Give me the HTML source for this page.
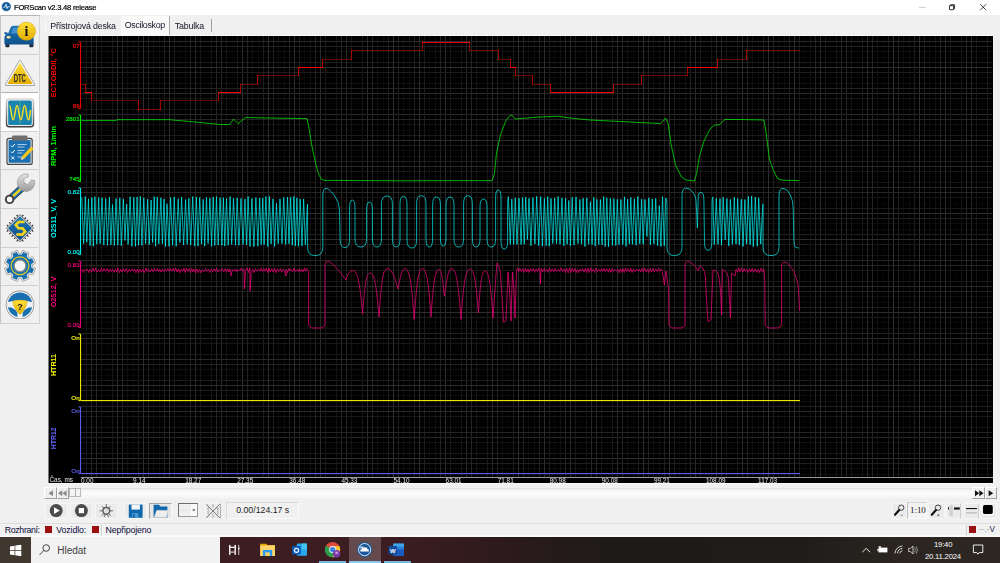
<!DOCTYPE html>
<html lang="cs"><head><meta charset="utf-8"><title>FORScan v2.3.48 release</title>
<style>
html,body{margin:0;padding:0;}
body{width:1000px;height:563px;overflow:hidden;background:#f0f0f0;position:relative;font-family:"Liberation Sans",sans-serif;color:#000;}
.a{position:absolute;}
.t{position:absolute;white-space:nowrap;line-height:1;}
#title{left:0;top:0;width:1000px;height:14.5px;background:#fff;}
#side{left:0;top:15px;width:39.5px;height:308.5px;background:#f0f0f0;border-right:1px solid #d4d4d4;border-left:1px solid #c4c4c4;border-top:1px solid #b4b4b4;box-sizing:border-box;}
.sep{position:absolute;left:1px;width:37px;height:1px;background:#d0d0d0;}
.plot{position:absolute;left:48px;top:36px;overflow:hidden;}
.btn{position:absolute;background:#ececec;border:1px solid #dcdcdc;box-sizing:border-box;}
</style></head><body>
<!-- title bar -->
<div id="title" class="a"></div>
<svg class="a" style="left:0;top:0" width="14" height="14" viewBox="0 0 14 14"><circle cx="6.3" cy="6.6" r="4.9" fill="#b8c0c8"/><circle cx="6.3" cy="6.6" r="4.4" fill="#0f5c9c"/><path d="M3.3 7.2h1.7l1.1-3 1 4.400.7-1.800h2" fill="none" stroke="#fff" stroke-width="0.8" stroke-linejoin="round"/></svg>
<div class="t" id="ttl" style="left:14px;top:3.9px;letter-spacing:-0.22px;font-size:7.6px;color:#000;-webkit-text-stroke:0.2px #000;">FORScan v2.3.48 release</div>
<svg class="a" style="left:910px;top:0" width="90" height="15" viewBox="910 0 90 15"><path d="M919 7.5h7" stroke="#c8c8c8" stroke-width="0.8"/><path d="M949.5 5.7h4v4h-4zM950.6 5.7v-1h4v4h-1" fill="none" stroke="#222" stroke-width="0.9"/><path d="M980.2 4.2l6 6M986.2 4.2l-6 6" stroke="#222" stroke-width="0.8"/></svg>

<!-- tabs -->
<div class="a" style="left:45px;top:19.5px;width:1px;height:12px;background:#fbfbfb"></div>
<div class="a" style="left:120.5px;top:16px;width:49px;height:19px;background:#fafafa;border-right:1px solid #a8a8a8;box-sizing:border-box"></div>
<div class="a" style="left:211px;top:19px;width:1px;height:13px;background:#a0a0a0"></div>
<div class="t" id="tab1" style="left:50.3px;top:21.7px;font-size:8.9px;letter-spacing:-0.18px;color:#14142a;">Přístrojová deska</div>
<div class="t" id="tab2" style="left:124.7px;top:20.7px;font-size:8.9px;letter-spacing:-0.32px;color:#14142a;">Osciloskop</div>
<div class="t" id="tab3" style="left:174.8px;top:21.7px;font-size:8.9px;letter-spacing:-0.2px;color:#14142a;">Tabulka</div>

<!-- sidebar -->
<div id="side" class="a"></div>
<div class="a" style="left:1px;top:92.6px;width:38px;height:38.2px;background:#fdfdfd"></div>
<div class="sep" style="top:53.5px"></div><div class="sep" style="top:92px;background:#b4b4b4"></div><div class="sep" style="top:130.8px"></div><div class="sep" style="top:169.3px"></div><div class="sep" style="top:208px"></div><div class="sep" style="top:246.6px"></div><div class="sep" style="top:285.2px"></div><div class="sep" style="top:323px;width:39px;left:0"></div>

<svg class="a" style="left:0;top:15px" width="40" height="310" viewBox="0 15 40 310">
<defs>
<linearGradient id="gy" x1="0" y1="0" x2="0" y2="1"><stop offset="0" stop-color="#ffe23a"/><stop offset="1" stop-color="#e2ac00"/></linearGradient>
<linearGradient id="gb" x1="0" y1="0" x2="0" y2="1"><stop offset="0" stop-color="#1d78b8"/><stop offset="1" stop-color="#0f4f8a"/></linearGradient>
<linearGradient id="gg" x1="0" y1="0" x2="0" y2="1"><stop offset="0" stop-color="#d8d8d8"/><stop offset="1" stop-color="#3c3c3c"/></linearGradient>
<linearGradient id="gs" x1="0" y1="0" x2="0" y2="1"><stop offset="0" stop-color="#e4e4e4"/><stop offset="1" stop-color="#9a9a9a"/></linearGradient>
</defs>
<!-- car + info -->
<g>
<rect x="5.4" y="43" width="4" height="4.2" rx="0.8" fill="#1c2a38"/><rect x="29.4" y="43" width="4" height="4.2" rx="0.8" fill="#1c2a38"/>
<path d="M4.3 32.2h2.6l1.2 1.2L10.6 27.6q.8-1.9 2.8-1.9h12q2 0 2.8 1.9L30.8 33.4l1.2-1.2h1.8v1.6l-1.6.8q1.4 1.4 1.4 3.6v5.2q0 1.2-1.2 1.2H5.6q-1.2 0-1.2-1.2v-5.2q0-2.2 1.4-3.6l-1.5-.8z" fill="url(#gb)"/>
<path d="M11 33.4l2-4.8q.4-.9 1.4-.9h10.4q1 0 1.400.9l2 4.800z" fill="#4d9bd4" opacity="0.8"/>
<ellipse cx="8.600" cy="37.2" rx="2.100" ry="1.300" fill="#ffe9a0"/><ellipse cx="30.4" cy="37.2" rx="2.100" ry="1.300" fill="#ffe9a0"/>
<circle cx="26.4" cy="31.2" r="9.100" fill="url(#gy)" stroke="#d89e00" stroke-width="0.5"/>
<text x="26.4" y="36.2" font-family="Liberation Serif, serif" font-weight="bold" font-size="14" text-anchor="middle" fill="#111">i</text>
</g>
<!-- DTC -->
<g>
<path d="M20 61.600L33.800 84.600H6.200z" fill="url(#gy)" stroke="#8c8c8c" stroke-width="2.600" stroke-linejoin="round"/>
<path d="M20 61.600L33.800 84.600H6.200z" fill="url(#gy)" stroke="#f4f4f4" stroke-width="1.300" stroke-linejoin="round"/>
<text x="19.800" y="82.200" font-family="Liberation Sans, sans-serif" font-size="10" font-weight="bold" text-anchor="middle" fill="#2a2a2a" textLength="12.200" lengthAdjust="spacingAndGlyphs">DTC</text>
</g>
<!-- oscilloscope -->
<g>
<rect x="5.800" y="98.200" width="28.400" height="29.200" rx="3.400" fill="url(#gg)"/>
<rect x="7.200" y="99.600" width="25.600" height="26.400" rx="2.300" fill="#f2f2f2"/>
<rect x="8.200" y="100.600" width="23.600" height="24.400" rx="1.600" fill="#1b84ae"/>
<path d="M20 101v23.600" stroke="#6fc070" stroke-width="0.600"/>
<path d="M9.400 105.500C11 105.500 11.400 119.800 13.200 119.800S15.200 105.500 17 105.500 19 119.800 20.800 119.800 22.800 105.500 24.600 105.500 26.600 119.800 28.400 119.800 29.800 112 30.600 110" fill="none" stroke="#f2dc28" stroke-width="1.500"/>
</g>
<!-- clipboard -->
<g>
<rect x="6.400" y="137.800" width="26.400" height="27.200" rx="2.600" fill="#484848"/>
<rect x="7.600" y="139" width="24" height="24.800" rx="1.600" fill="#e8e8e8"/>
<rect x="8.600" y="140" width="22" height="22.800" rx="1" fill="#1a6fb0"/>
<rect x="12" y="135.600" width="15.400" height="5.200" rx="1.200" fill="#6e6e6e"/>
<g stroke="#fff" stroke-width="1" fill="none"><path d="M11 145.600l1.400 1.400 2.400-3M11 151.600l1.400 1.400 2.400-3M11.200 156.400l3 3M14.200 156.400l-3 3"/></g>
<g stroke="#cfe2f2" stroke-width="0.800"><path d="M17.500 144.500h9M17.500 147h7M17.500 150.500h7M17.500 153h5M17.500 157h4"/></g>
<path d="M31.200 146.600l2.400 2.200-9.600 10.200-2.400-2.200z" fill="#f4c81e"/><path d="M21.600 156.800l2.400 2.200-3.600 1.400z" fill="#f0dcb4"/><path d="M20.400 160.400l1.300-.5-.8-.8z" fill="#222"/>
</g>
<!-- wrench -->
<g>
<path d="M10.600 198.400L23 187" stroke="#3a3a3a" stroke-width="7.400" stroke-linecap="round"/>
<path d="M10.600 198.400L23 187" stroke="#1a6fb0" stroke-width="5.800" stroke-linecap="round"/>
<path d="M13 196.200L21.500 188.400" stroke="#f0d024" stroke-width="2.600"/>
<circle cx="9.600" cy="199.400" r="4.700" fill="#3a3a3a"/><circle cx="9.600" cy="199.400" r="2.800" fill="#f6f6f6"/>
<path d="M27.800 174A8.800 8.800 0 1 0 34.600 180.600L31.400 179.800 28.200 184.400 24.200 183.200 23.800 178.800 28.400 176.600z" fill="url(#gs)" stroke="#8e8e8e" stroke-width="0.600" stroke-linejoin="round"/>
</g>
<!-- chip -->
<g>
<path d="M8.3 226.3l-1.5 -1.5M10.8 223.8l-1.5 -1.5M13.2 221.4l-1.5 -1.5M15.6 219.0l-1.5 -1.5M18.1 216.5l-1.5 -1.5M31.7 226.3l1.5 -1.5M29.2 223.8l1.5 -1.5M26.8 221.4l1.5 -1.5M24.4 219.0l1.5 -1.5M21.9 216.5l1.5 -1.5M8.3 230.1l-1.5 1.5M10.8 232.6l-1.5 1.5M13.2 235.0l-1.5 1.5M15.6 237.4l-1.5 1.5M18.1 239.9l-1.5 1.5M31.7 230.1l1.5 1.5M29.2 232.6l1.5 1.5M26.8 235.0l1.5 1.5M24.4 237.4l1.5 1.5M21.9 239.9l1.5 1.5" stroke="#2e2e2e" stroke-width="1.100"/>
<path d="M20 214.6L33.6 228.2 20 241.8 6.4 228.2z" fill="#dcdcdc" stroke="#6e6e6e" stroke-width="1" stroke-linejoin="round"/>
<path d="M20 217.2L31.0 228.2 20 239.2 9.0 228.2z" fill="url(#gb)" stroke="url(#gb)" stroke-width="1.500" stroke-linejoin="round"/>
<path d="M24.600 222l-5.800-.2-3 3 2.600 3.300 4.200.200 2.600 3.300-3 3-5.800-.2" fill="none" stroke="#f4d21e" stroke-width="2.700"/>
</g>
<!-- gear -->
<g transform="translate(20 265.800)">
<path d="M1.5 -11.8L3.0 -14.6L8.2 -12.4L7.3 -9.4L9.4 -7.3L12.4 -8.2L14.6 -3.0L11.8 -1.5L11.8 1.5L14.6 3.0L12.4 8.2L9.4 7.3L7.3 9.4L8.2 12.4L3.0 14.6L1.5 11.8L-1.5 11.8L-3.0 14.6L-8.2 12.4L-7.3 9.4L-9.4 7.3L-12.4 8.2L-14.6 3.0L-11.8 1.5L-11.8 -1.5L-14.6 -3.0L-12.4 -8.2L-9.4 -7.3L-7.3 -9.4L-8.2 -12.4L-3.0 -14.6L-1.5 -11.8z" fill="#1a6fb0" stroke="#8c8c8c" stroke-width="2.200" stroke-linejoin="round"/>
<path d="M1.5 -11.8L3.0 -14.6L8.2 -12.4L7.3 -9.4L9.4 -7.3L12.4 -8.2L14.6 -3.0L11.8 -1.5L11.8 1.5L14.6 3.0L12.4 8.2L9.4 7.3L7.3 9.4L8.2 12.4L3.0 14.6L1.5 11.8L-1.5 11.8L-3.0 14.6L-8.2 12.4L-7.3 9.4L-9.4 7.3L-12.4 8.2L-14.6 3.0L-11.8 1.5L-11.8 -1.5L-14.6 -3.0L-12.4 -8.2L-9.4 -7.3L-7.3 -9.4L-8.2 -12.4L-3.0 -14.6L-1.5 -11.8z" fill="#1a6fb0" stroke="#e4e4e4" stroke-width="1.100" stroke-linejoin="round"/>
<circle r="8.900" fill="none" stroke="#e8d020" stroke-width="1.100"/>
<circle r="5.900" fill="#f4f4f4" stroke="#8a8a8a" stroke-width="1.300"/>
</g>
<!-- steering wheel -->
<g transform="translate(20 304.800)">
<circle r="14.300" fill="#8a8a8a"/><circle r="13.600" fill="#f2f2f2"/>
<circle r="12.300" fill="#1a6fb0"/>
<path d="M-12.600 -2.500Q0 -6.500 12.600 -2.500L12.600 2.500Q6 2 2.600 8L2.600 13H-2.600L-2.600 8Q-6 2 -12.600 2.500z" fill="#f2f2f2"/>
<path d="M-7.300 -3.600Q0 -5.800 7.300 -3.600Q6.200 4.500 0 9.600Q-6.200 4.500 -7.300 -3.600z" fill="url(#gy)" stroke="#c89800" stroke-width="0.400"/>
<text x="0" y="5.400" font-family="Liberation Sans, sans-serif" font-weight="bold" font-size="9" text-anchor="middle" fill="#222">?</text>
</g>
</svg>

<div class="a" style="left:48px;top:35px;width:946px;height:449px;background:#f8f8f8"></div>
<svg class="plot" width="945" height="447" viewBox="48 36 945 447">
<rect x="48.5" y="36" width="944.5" height="447" fill="#000"/>
<g stroke-width="1" fill="none" shape-rendering="crispEdges"><path d="M205.5 36V477M330.5 36V477M455.5 36V477M580.5 36V477M705.5 36V477M830.5 36V477M955.5 36V477" stroke="#040404"/><path d="M107.5 36V477M232.5 36V477M357.5 36V477M482.5 36V477M607.5 36V477M732.5 36V477M857.5 36V477M982.5 36V477" stroke="#050505"/><path d="M133.5 36V477M179.5 36V477M258.5 36V477M304.5 36V477M383.5 36V477M429.5 36V477M508.5 36V477M554.5 36V477M633.5 36V477M679.5 36V477M758.5 36V477M804.5 36V477M883.5 36V477M929.5 36V477" stroke="#090909"/><path d="M153.5 36V477M159.5 36V477M278.5 36V477M284.5 36V477M403.5 36V477M409.5 36V477M528.5 36V477M534.5 36V477M653.5 36V477M659.5 36V477M778.5 36V477M784.5 36V477M903.5 36V477M909.5 36V477" stroke="#0d0d0d"/><path d="M127.5 36V477M252.5 36V477M377.5 36V477M502.5 36V477M627.5 36V477M752.5 36V477M877.5 36V477" stroke="#101010"/><path d="M185.5 36V477M310.5 36V477M435.5 36V477M560.5 36V477M685.5 36V477M810.5 36V477M935.5 36V477" stroke="#111111"/><path d="M86.5 36V477M101.5 36V477M211.5 36V477M226.5 36V477M336.5 36V477M351.5 36V477M461.5 36V477M476.5 36V477M586.5 36V477M601.5 36V477M711.5 36V477M726.5 36V477M836.5 36V477M851.5 36V477M961.5 36V477M976.5 36V477" stroke="#141414"/><path d="M112.5 36V477M200.5 36V477M237.5 36V477M325.5 36V477M362.5 36V477M450.5 36V477M487.5 36V477M575.5 36V477M612.5 36V477M700.5 36V477M737.5 36V477M825.5 36V477M862.5 36V477M950.5 36V477M987.5 36V477" stroke="#181818"/><path d="M174.5 36V477M299.5 36V477M424.5 36V477M549.5 36V477M674.5 36V477M799.5 36V477M924.5 36V477" stroke="#1b1b1b"/><path d="M138.5 36V477M263.5 36V477M388.5 36V477M513.5 36V477M638.5 36V477M763.5 36V477M888.5 36V477" stroke="#1c1c1c"/><path d="M148.5 36V477M164.5 36V477M273.5 36V477M289.5 36V477M398.5 36V477M414.5 36V477M523.5 36V477M539.5 36V477M648.5 36V477M664.5 36V477M773.5 36V477M789.5 36V477M898.5 36V477M914.5 36V477" stroke="#1f1f1f"/><path d="M122.5 36V477M190.5 36V477M247.5 36V477M315.5 36V477M372.5 36V477M440.5 36V477M497.5 36V477M565.5 36V477M622.5 36V477M690.5 36V477M747.5 36V477M815.5 36V477M872.5 36V477M940.5 36V477" stroke="#222222"/><path d="M96.5 36V477M221.5 36V477M346.5 36V477M471.5 36V477M596.5 36V477M721.5 36V477M846.5 36V477M971.5 36V477" stroke="#252525"/><path d="M91.5 36V477M216.5 36V477M341.5 36V477M466.5 36V477M591.5 36V477M716.5 36V477M841.5 36V477M966.5 36V477" stroke="#262626"/><path d="M117.5 36V477M195.5 36V477M242.5 36V477M320.5 36V477M367.5 36V477M445.5 36V477M492.5 36V477M570.5 36V477M617.5 36V477M695.5 36V477M742.5 36V477M820.5 36V477M867.5 36V477M945.5 36V477" stroke="#292929"/><path d="M169.5 36V477M294.5 36V477M419.5 36V477M544.5 36V477M669.5 36V477M794.5 36V477M919.5 36V477" stroke="#2c2c2c"/><path d="M143.5 36V477M268.5 36V477M393.5 36V477M518.5 36V477M643.5 36V477M768.5 36V477M893.5 36V477" stroke="#2d2d2d"/><g style="mix-blend-mode:lighten"><path d="M81 103.5H992M81 276.5H992" stroke="#040404"/><path d="M81 421.5H992" stroke="#050505"/><path d="M81 176.5H992M81 203.5H992" stroke="#060606"/><path d="M81 448.5H992" stroke="#070707"/><path d="M81 130.5H992M81 249.5H992" stroke="#080808"/><path d="M81 322.5H992M81 375.5H992" stroke="#090909"/><path d="M81 57.5H992M81 77.5H992" stroke="#0a0a0a"/><path d="M81 302.5H992M81 395.5H992" stroke="#0b0b0b"/><path d="M81 150.5H992M81 229.5H992" stroke="#0c0c0c"/><path d="M81 468.5H992M81 474.5H992" stroke="#0d0d0d"/><path d="M81 156.5H992M81 223.5H992" stroke="#0e0e0e"/><path d="M81 296.5H992M81 401.5H992" stroke="#0f0f0f"/><path d="M81 51.5H992M81 83.5H992" stroke="#101010"/><path d="M81 328.5H992M81 369.5H992" stroke="#111111"/><path d="M81 124.5H992M81 255.5H992" stroke="#121212"/><path d="M81 197.5H992M81 442.5H992" stroke="#131313"/><path d="M81 182.5H992" stroke="#141414"/><path d="M81 109.5H992M81 270.5H992M81 427.5H992" stroke="#151515"/><path d="M81 354.5H992" stroke="#161616"/><path d="M81 98.5H992M81 343.5H992" stroke="#171717"/><path d="M81 281.5H992M81 416.5H992" stroke="#181818"/><path d="M81 171.5H992M81 208.5H992" stroke="#191919"/><path d="M81 453.5H992" stroke="#1a1a1a"/><path d="M81 135.5H992M81 244.5H992" stroke="#1b1b1b"/><path d="M81 62.5H992M81 317.5H992M81 380.5H992" stroke="#1c1c1c"/><path d="M81 72.5H992M81 307.5H992" stroke="#1d1d1d"/><path d="M81 145.5H992M81 390.5H992" stroke="#1e1e1e"/><path d="M81 234.5H992M81 463.5H992" stroke="#1f1f1f"/><path d="M81 161.5H992M81 218.5H992" stroke="#202020"/><path d="M81 291.5H992M81 406.5H992" stroke="#212121"/><path d="M81 46.5H992M81 88.5H992" stroke="#222222"/><path d="M81 333.5H992M81 364.5H992" stroke="#232323"/><path d="M81 119.5H992M81 260.5H992" stroke="#242424"/><path d="M81 192.5H992M81 437.5H992" stroke="#252525"/><path d="M81 187.5H992M81 432.5H992" stroke="#262626"/><path d="M81 114.5H992M81 265.5H992" stroke="#272727"/><path d="M81 338.5H992M81 359.5H992" stroke="#282828"/><path d="M81 41.5H992M81 93.5H992M81 286.5H992" stroke="#292929"/><path d="M81 166.5H992M81 411.5H992" stroke="#2a2a2a"/><path d="M81 213.5H992" stroke="#2b2b2b"/><path d="M81 140.5H992M81 239.5H992M81 458.5H992" stroke="#2c2c2c"/><path d="M81 312.5H992M81 385.5H992" stroke="#2d2d2d"/><path d="M81 67.5H992" stroke="#2e2e2e"/></g></g>
<path d="M81 477.5H993" stroke="#9a9a9a" stroke-width="1" shape-rendering="crispEdges"/>
<g fill="#ff0000" font-family="Liberation Sans, sans-serif">
<path d="M78.4 42H80.6V108.6H78.4" stroke="#ff0000" stroke-width="1" fill="none"/>
<text x="79.6" y="48.4" font-size="6.2" text-anchor="end" stroke="#ff0000" stroke-width="0.15">97</text>
<text x="79.6" y="108" font-size="6.2" text-anchor="end" stroke="#ff0000" stroke-width="0.15">89</text>
<text transform="translate(55.9 72.7) rotate(-90)" font-size="7.2" font-weight="bold" text-anchor="middle" textLength="49.3" lengthAdjust="spacingAndGlyphs">ECT.OBDII, °C</text>
</g>
<g fill="#00ff00" font-family="Liberation Sans, sans-serif">
<path d="M78.4 115H80.6V181.6H78.4" stroke="#00ff00" stroke-width="1" fill="none"/>
<text x="79.6" y="121.4" font-size="6.2" text-anchor="end" stroke="#00ff00" stroke-width="0.15">2801</text>
<text x="79.6" y="181" font-size="6.2" text-anchor="end" stroke="#00ff00" stroke-width="0.15">745</text>
<text transform="translate(55.9 146) rotate(-90)" font-size="7.2" font-weight="bold" text-anchor="middle" textLength="40" lengthAdjust="spacingAndGlyphs">RPM, 1/min</text>
</g>
<g fill="#00ffff" font-family="Liberation Sans, sans-serif">
<path d="M78.4 188H80.6V254.6H78.4" stroke="#00ffff" stroke-width="1" fill="none"/>
<text x="79.6" y="194.4" font-size="6.2" text-anchor="end" stroke="#00ffff" stroke-width="0.15">0.82</text>
<text x="79.6" y="254" font-size="6.2" text-anchor="end" stroke="#00ffff" stroke-width="0.15">0.00</text>
<text transform="translate(55.9 218.4) rotate(-90)" font-size="7.2" font-weight="bold" text-anchor="middle" textLength="39.2" lengthAdjust="spacingAndGlyphs">O2S11_V, V</text>
</g>
<g fill="#ff0080" font-family="Liberation Sans, sans-serif">
<path d="M78.4 261H80.6V327.6H78.4" stroke="#ff0080" stroke-width="1" fill="none"/>
<text x="79.6" y="267.4" font-size="6.2" text-anchor="end" stroke="#ff0080" stroke-width="0.15">0.83</text>
<text x="79.6" y="327" font-size="6.2" text-anchor="end" stroke="#ff0080" stroke-width="0.15">0.00</text>
<text transform="translate(55.9 292) rotate(-90)" font-size="7.2" font-weight="bold" text-anchor="middle" textLength="30.7" lengthAdjust="spacingAndGlyphs">O2S12, V</text>
</g>
<g fill="#ffff00" font-family="Liberation Sans, sans-serif">
<path d="M78.4 334H80.6V400.6H78.4" stroke="#ffff00" stroke-width="1" fill="none"/>
<text x="79.6" y="340.4" font-size="6.2" text-anchor="end" stroke="#ffff00" stroke-width="0.15">On</text>
<text x="79.6" y="400" font-size="6.2" text-anchor="end" stroke="#ffff00" stroke-width="0.15">On</text>
<text transform="translate(55.9 365) rotate(-90)" font-size="7.2" font-weight="bold" text-anchor="middle" textLength="22" lengthAdjust="spacingAndGlyphs">HTR11</text>
</g>
<g fill="#6464ff" font-family="Liberation Sans, sans-serif">
<path d="M78.4 407H80.6V473.6H78.4" stroke="#6464ff" stroke-width="1" fill="none"/>
<text x="79.6" y="413.4" font-size="6.2" text-anchor="end" stroke="#6464ff" stroke-width="0.15">On</text>
<text x="79.6" y="473" font-size="6.2" text-anchor="end" stroke="#6464ff" stroke-width="0.15">On</text>
<text transform="translate(55.9 438.3) rotate(-90)" font-size="7.2" font-weight="bold" text-anchor="middle" textLength="22" lengthAdjust="spacingAndGlyphs">HTR12</text>
</g>
<g fill="#ff0000" shape-rendering="crispEdges"><rect x="80" y="84" width="6" height="1" opacity="0.43"/><rect x="85" y="84" width="1" height="9" opacity="0.62"/><rect x="85" y="92" width="7" height="1" opacity="0.98"/><rect x="91" y="92" width="1" height="9" opacity="0.62"/><rect x="91" y="100" width="48" height="1" opacity="0.38"/><rect x="138" y="100" width="1" height="10" opacity="0.62"/><rect x="138" y="109" width="23" height="1" opacity="0.47"/><rect x="160" y="100" width="1" height="10" opacity="0.62"/><rect x="160" y="100" width="59" height="1" opacity="0.38"/><rect x="218" y="92" width="1" height="9" opacity="0.62"/><rect x="218" y="92" width="23" height="1" opacity="0.98"/><rect x="240" y="84" width="1" height="9" opacity="0.62"/><rect x="240" y="84" width="18" height="1" opacity="0.43"/><rect x="257" y="75" width="1" height="10" opacity="0.62"/><rect x="257" y="75" width="42" height="1" opacity="0.42"/><rect x="298" y="67" width="1" height="9" opacity="0.62"/><rect x="298" y="67" width="25" height="1" opacity="0.99"/><rect x="322" y="59" width="1" height="9" opacity="0.62"/><rect x="322" y="59" width="30" height="1" opacity="0.39"/><rect x="351" y="50" width="1" height="10" opacity="0.62"/><rect x="351" y="50" width="72" height="1" opacity="0.46"/><rect x="422" y="42" width="1" height="9" opacity="0.62"/><rect x="422" y="42" width="48" height="1" opacity="0.95"/><rect x="469" y="42" width="1" height="9" opacity="0.62"/><rect x="469" y="50" width="30" height="1" opacity="0.46"/><rect x="498" y="50" width="1" height="10" opacity="0.62"/><rect x="498" y="59" width="13" height="1" opacity="0.39"/><rect x="510" y="59" width="1" height="9" opacity="0.62"/><rect x="510" y="67" width="6" height="1" opacity="0.99"/><rect x="515" y="67" width="1" height="9" opacity="0.62"/><rect x="515" y="75" width="18" height="1" opacity="0.42"/><rect x="532" y="75" width="1" height="10" opacity="0.62"/><rect x="532" y="84" width="19" height="1" opacity="0.43"/><rect x="550" y="84" width="1" height="9" opacity="0.62"/><rect x="550" y="92" width="64" height="1" opacity="0.98"/><rect x="613" y="84" width="1" height="9" opacity="0.62"/><rect x="613" y="84" width="29" height="1" opacity="0.43"/><rect x="641" y="75" width="1" height="10" opacity="0.62"/><rect x="641" y="75" width="47" height="1" opacity="0.42"/><rect x="687" y="67" width="1" height="9" opacity="0.62"/><rect x="687" y="67" width="31" height="1" opacity="0.99"/><rect x="717" y="59" width="1" height="9" opacity="0.62"/><rect x="717" y="59" width="30" height="1" opacity="0.39"/><rect x="746" y="50" width="1" height="10" opacity="0.62"/><rect x="746" y="50" width="54" height="1" opacity="0.46"/></g>
<path d="M81.5 120.6L115 120.6L118 119.7L169 119.7L190 121.5L220 124.5L229.6 124.5L233.5 119.1L238 123.6L245.5 117.6L270 118L307 118.6L309 128L311.5 144L316 165L319 175L321.5 179.3L324.5 180.4L400 180.8L492 180.6L494.4 174L496.5 153L500.4 135L505.5 121.5L508.5 117L511 115L513 116.5L515.4 119L537 117.2L558 116.2L570 118L590 120L650 123L660.5 123.6L663 121L665.6 118L668 123L671 144L675.5 165L681.5 177L686 180L694.4 181L696.5 174L699.5 156L704 141L710 129L714.5 125L719 125L725 119.4L745 119.6L764 120L766.4 135L769.4 159L773 169.5L777.5 178.5L782 180.2L799.4 180.6" stroke="#00ff00" stroke-width="0.7" fill="none" stroke-linejoin="round" opacity="1"/>
<path d="M81.8 197.3L83.6 243.7L85.3 196.5L86.8 242.3L88.5 198.9L90.1 245.6L91.9 197.6L93.3 246.3L94.9 196.7L96.8 244.1L98.7 197.5L100.1 243.7L102 197.7L103.8 245L105.7 198.5L107.5 245.2L109.4 197.2L110.9 244.9L112.5 204.5L114.4 245.4L116 198.5L117.8 245L119.8 197.8L121.3 245.8L123.4 198.9L125 240.5L126.6 204.1L128.1 244.3L130.1 196.6L131.9 246.4L133.8 197.2L135.5 246.4L137.1 196.9L138.6 245.1L140.3 196.3L141.9 245.4L143.8 197.9L145.6 243.7L147.6 199.1L149.2 244.8L151.1 200L152.6 242.6L154.2 196.6L155.6 246.4L157.2 197.1L158.8 243.9L160.9 197.8L162.4 243.8L164 199L165.5 246.6L167 203.7L169 246.3L170.6 197.5L172.6 245.3L174.2 197L176.2 246.3L178.2 198.7L179.9 242.5L181.6 197.1L183.6 245L185.6 199.4L187.2 244.2L188.8 198.3L190.7 245.1L192.7 196.6L194.7 246.1L196.4 196.9L198 246.1L199.7 197.6L201.6 244.1L203.2 199.2L204.7 246.2L206.5 197.4L208.1 243.5L209.9 198L211.6 246.4L213.2 197.1L214.8 245.4L216.5 196.7L218.2 245L220.1 197.6L221.9 245.3L223.4 197.7L224.8 246.1L226.5 198.6L228.2 245.2L230.1 196.6L231.7 244.4L233.5 198.1L235.5 245L237.2 197.9L238.9 245.3L241 198.5L243 244.4L245 199L246.5 245L248.1 196.5L250 246.5L251.9 198.4L253.9 246.7L255.9 197.6L257.9 246.2L259.7 197.9L261.2 244.6L262.7 198.1L264.1 244.6L265.9 196.5L267.8 246.7L269.4 196.4L271.1 243.9L273 198.9L274.6 246.5L276.5 203.4L278.2 243.7L280 198.9L282 243.7L283.7 197.4L285.7 244.4L287.5 197.1L289 243.7L290.6 197.3L292.3 245.2L293.9 196.4L295.4 245.9L296.9 197.8L298.5 246.2L300.2 199L302 245.8L303.6 199L305.4 244.8" stroke="#00ffff" stroke-width="0.68" fill="none" stroke-linejoin="round" opacity="1"/>
<path d="M508.4 196.7L510.3 244.3L511.8 199L513.6 244.4L515.3 197.8L517 244.4L519 198.1L521.1 244.5L522.5 197.5L524.3 244.2L525.7 197.1L527.4 239.5L529 198.2L530.9 245.7L532.9 197.5L534.9 244L536.7 196.4L538.7 245.6L540.7 196.7L542.4 246.3L544.4 198.2L546.2 245.8L547.7 196.7L549.2 246.3L551 198.3L552.8 243.5L554.7 197.9L556.5 243.7L558.1 196.5L560 244.2L562 197.9L563.8 245.8L565.6 198.4L567.1 244.3L568.8 200.5L570.4 245.7L572.2 197.2L574 245L576 196.9L578 243.6L579.9 199.4L581.5 244.2L583.1 198.2L584.9 246.6L586.8 197.9L588.7 244.3L590.4 201.8L592.1 244.5L593.8 197.3L595.2 246L596.8 199.3L598.8 244.5L600.4 199.5L602.1 244.9L603.6 196.6L605.2 246.6L606.8 197.9L608.5 246.7L610.4 198.3L612.4 245.3L613.9 198.6L615.8 245.6L617.3 199.3L619 244.6L620.9 199.4L622.8 244.5L624.5 196.8L626 246.5L627.6 199.2L629.3 244L630.8 197.4L632.4 244.4L634.4 198.7L636.1 245.2L637.8 196.5L639.8 243.9L641.6 199.1L643.2 244.3L645 199.4L646.9 236.6L648.9 197.8L650.4 244.8L652.3 199L653.9 243.9L655.7 198.5L657.6 245.6L659.3 205.5L660.9 246.5L662.5 196.7L664.3 245.8L665.8 198" stroke="#00ffff" stroke-width="0.68" fill="none" stroke-linejoin="round" opacity="1"/>
<path d="M712.8 197L714.3 244.5L716.3 198.4L718 244.3L720 198.6L721.5 245.1L723.2 197.1L725.2 239.9L726.9 198.5L728.8 245.9L730.4 199.4L732.4 244.3L734.3 197.2L736 244.1L737.7 198.4L739.3 244.8L741.3 199.2L743 246.5L744.9 199.5L746.5 244.1L748.4 196.4L750.1 244.7L751.6 196.3L753.3 246.7L755.3 197L757.3 246.2L758.7 197.8L760.7 244.1" stroke="#00ffff" stroke-width="0.68" fill="none" stroke-linejoin="round" opacity="1"/>
<path d="M305.4 244.8L307.2 208Q307.6 200 307.6 208L307.6 247.6Q307.6 255.6 315.2 255.6L315.2 255.6Q322.8 255.6 322.8 247.6L322.8 196.4Q322.8 188.4 325.9 188.4L325.9 188.4Q329 188.4 333.9 194.8L334.5 195.6Q339.4 202 339.5 210L340.1 239.6Q340.2 247.6 344.9 247.6L344.9 247.6Q349.6 247.6 349.6 239.6L349.6 208Q349.6 200 352.3 200L352.3 200Q355 200 355 208L355 239Q355 247 360.8 247L360.8 247Q366.6 247 366.6 239L366.6 210Q366.6 202 369.5 202L369.5 202Q372.4 202 372.4 210L372.4 239Q372.4 247 376.9 247L376.9 247Q381.4 247 381.4 239L381.4 204Q381.4 196 386.9 196L386.9 196Q392.4 196 392.4 204L392.4 239Q392.4 247 396.2 247L396.2 247Q400 247 400 239L400 204.4Q400 196.4 403.5 196.4L403.5 196.4Q407 196.4 407 204.4L407 240Q407 248 411.8 248L411.8 248Q416.6 248 416.6 240L416.6 203.6Q416.6 195.6 421.3 195.6L421.3 195.6Q426 195.6 426 203.6L426 239Q426 247 429.3 247L429.3 247Q432.6 247 432.6 239L432.6 205Q432.6 197 436.5 197L436.5 197Q440.4 197 440.4 205L440.4 238Q440.4 246 443.2 246L443.2 246Q446 246 446 238L446 205Q446 197 450 197L450 197Q454 197 454 205L454 239Q454 247 458.8 247L458.8 247Q463.6 247 463.6 239L463.6 203.6Q463.6 195.6 468 195.6L468 195.6Q472.4 195.6 472.4 203.6L472.4 239Q472.4 247 476.2 247L476.2 247Q480 247 480 239L480 207Q480 199 483.5 199L483.5 199Q487 199 487 207L487 239Q487 247 491.3 247L491.3 247Q495.6 247 495.6 239L495.6 198Q495.6 190 498.3 190L498.3 190Q501 190 501 198L501 241Q501 249 504.3 249L504.3 249Q507.6 249 507.6 241L507.6 208Q507.6 200 508 198.4L508.4 196.7" stroke="#00ffff" stroke-width="0.7" fill="none" stroke-linejoin="round" opacity="0.95"/>
<path d="M665.8 198L666.4 199Q667 200 667 208L667 247.6Q667 255.6 674.5 255.6L674.5 255.6Q682 255.6 682 247.6L682 196Q682 188 686 188L686 188Q690 188 692.9 192.5L694.2 194.5Q695.8 197 696 200L697.4 228L698.3 195.4Q698.4 192.4 701.1 192.4L701.1 192.4Q703.8 192.4 703.9 200.4L704.5 242.4Q704.6 250.4 708.2 250.4L708.2 250.4Q711.8 250.4 711.8 242.4L712 208Q712 200 712.4 198.5L712.8 197" stroke="#00ffff" stroke-width="0.7" fill="none" stroke-linejoin="round" opacity="0.95"/>
<path d="M760.7 244.1L762.6 208Q763 200 763 208L763 247.6Q763 255.6 771 255.6L771 255.6Q779 255.6 779 247.6L779 196.4Q779 188.4 783 188.4L783 188.4Q787 188.4 790 194.2L790 194.2Q793 200 793.2 208L793.8 238Q794 246 795 246.8L795 246.8Q796 247.5 797.5 247.8L799 248" stroke="#00ffff" stroke-width="0.7" fill="none" stroke-linejoin="round" opacity="0.95"/>
<path d="M81.8 269.5L83.1 272.5L84.6 269.5L85.8 271.1L87.4 269.1L88.8 272.6L90.1 269.1L91.7 272.1L93 268.3L94.3 271.5L95.4 268.2L97 272.1L98.6 269.6L99.8 271.9L101.4 267.9L102.7 271.5L104.1 268.7L105.6 271.3L107.2 268.3L108.7 272.4L110.1 269L111.4 271.7L112.9 269.5L114.1 272.4L115.4 269.5L116.6 272L117.9 267.8L119.4 272.8L120.7 269.4L121.9 271.9L123.3 268.8L124.6 271.8L126 268.4L127.5 272.5L129 269.4L130.5 271.5L131.9 268.9L133.4 271.4L134.6 269.2L135.9 272.6L137.3 269L138.6 272.8L140 269.2L141.5 272.2L143.1 269.4L144.4 272.5L146 268L147.1 271.5L148.3 269.3L149.9 272L151.5 268.9L153 271.8L154.3 268.2L155.9 271.2L157.3 268.5L158.6 271.7L159.8 269.2L161 272.1L162.5 269.2L163.6 271.6L165.1 269.3L166.4 271.4L167.9 268.6L169.1 271.2L170.4 268.6L171.8 271.2L173.1 268.3L174.4 271.5L175.7 267.9L177 272L178.3 268.9L179.8 272.8L181.1 269.2L182.6 271.4L183.8 268L185.1 272.5L186.4 268L187.8 271.3L188.9 268.6L190.4 272.6L191.6 268.5L192.9 271.9L194.1 269.1L195.5 272.7L196.7 268.7L198.2 272.7L199.4 269.4L201 272.8L202.4 269.5L203.9 271.7L205.5 268.5L207 271.3L208.5 269.2L209.9 272.5L211.4 269.3L212.6 271.7L214 268.9L215.2 271.4L216.7 268L217.9 272L219.4 269.5L220.9 271.2L222.3 268.6L223.7 271.6L225.1 268.6L226.4 272.2L227.8 268.8L228.9 272.1L230.3 269.2L231 276L231.8 272.4L233.1 269.3L234.5 271.2L235.7 268.8L236.9 271.8L238.3 269.5L239.7 271.1L241.2 268.2L242.6 271.1L244 268.9L244.4 289L245.5 271.2L247.1 267.8L248.6 272.5L249.8 267.8L250 291L251.2 272.7L252.7 269.3L254.2 272.7L255.4 269L256.9 271.3L258.5 269.1L260 271.3L261.3 267.9L262.6 271.5L264 269L265.1 271.3L266.4 267.9L267.8 272.6L269 268.2L270.2 272L271.7 269L273.2 272L274.6 268L275.8 272.8L277.3 268.9L278.8 271.5L280.4 268.6L281.7 272.4L283 269.3L284.5 271.1L286 276L286 269.1L287.5 272.8L288.9 268.4L290.2 271L291.3 269.3L292.8 271.8L294.1 268L295.4 271.4L296.8 269.6L298 271.6L299.2 269L300.4 272.1L301.8 269.2L303.2 271.9L304.5 267.9L305.7 271.3L306.9 268.5" stroke="#ff0080" stroke-width="0.7" fill="none" stroke-linejoin="round" opacity="1"/>
<path d="M306.9 268.5L307.8 269.5Q308.6 270.6 308.6 275.6L308.6 323Q308.6 328 313.6 328L320 328Q325 328 325 323L325 266Q325 263 326.3 261.9L326.3 261.9Q327.6 260.8 329.8 261.9L329.8 261.9Q332 263 334.6 266L336.4 268Q339 271 341.5 274.2L346 280" stroke="#ff0080" stroke-width="0.7" fill="none" stroke-linejoin="round" opacity="1"/>
<path d="M346 280C348 273.4 349.5 270.6 353 270.6C357.8 270.6 359.9 283.6 362.6 314C364.7 285.3 366.3 273 370 273C374.5 273 376.5 286.2 379 317C381.2 283.1 383 268.6 387 268.6C392.5 268.6 394.9 278.8 398 289C400 278.8 401.5 268.6 405 268.6C409.6 268.6 411.6 283.8 414.2 319.4C416.5 283.8 418.3 268.6 422.4 268.6C426.7 268.6 428.6 283.1 431 317C433.2 283.7 435 269.4 439 269.4C441.7 269.4 442.9 282.7 444.4 296C446.4 282.3 448 268.6 451.6 268.6C456.3 268.6 458.4 283.8 461 319.4C463.5 284.1 465.5 269 470 269C474.2 269 476 282.2 478.4 313C480.2 283.6 481.7 271 485 271C489 271 490.8 285.1 493 318" stroke="#ff0080" stroke-width="0.7" fill="none" stroke-linejoin="round" opacity="1"/>
<path d="M493 318L495.3 285Q495.6 280 496 275L497 263L498.5 266Q500 269 500.4 274L501.2 285Q501.6 290 501.9 295L503.5 321.6Q503.6 322.6 504.4 322L505.2 321.6Q506 321 506 320L508 272L509.2 285Q509.6 290 509.8 295L511 321L512.4 272L513.6 285Q514 290 514.2 295L515 318L516.6 270L517.4 268.2" stroke="#ff0080" stroke-width="0.7" fill="none" stroke-linejoin="round" opacity="1"/>
<path d="M517.4 268.2L518.7 271.5L519.9 268.4L521.3 271.6L522.7 268.8L524.3 272.3L525.6 268L526.7 272L528.1 269.2L529.2 272.4L530.4 268.6L532 271.3L533.2 268.5L534.6 272.2L536.1 269.3L537.4 271.5L538.6 268L540.1 272.3L540.4 284L541.2 268.1L542.7 271.8L544.2 268.8L545.4 271.2L546.7 269.5L548 272.3L549.5 268.1L550.9 271.5L552.3 268.8L553.8 271.9L555.1 268.4L556.7 271.4L558.2 269.6L559.5 271.4L561 267.9L562.5 271.6L564 269L565.3 272.6L566.7 268.4L568.2 272.8L569.5 268.1L571 272.5L572.3 268.3L573.7 271.6L575 268.5L576.2 272.6L577.4 269.6L578.6 272.7L579.9 269.3L581 271.1L582.5 268.5L584 272.3L585.2 268.5L586.5 272.5L588 268L589.2 272.6L590.7 267.9L591.9 271.4L593.1 269.5L594.7 272.5L596.1 268.1L597.5 271.5L598.7 269.4L600.2 271.4L601.5 268.8L602.7 271.5L603.9 268.3L605.3 271.6L606.8 268.7L608.4 272.1L609.5 268.9L610.9 272.4L612.2 268.3L613.6 271.4L615.1 269.4L616.6 271.3L617.8 269.2L619.3 272.8L620.4 268.7L621.8 272.4L623 268.7L624.3 272.5L625.6 267.9L626.9 271.4L628.4 268.7L629.6 272.1L630.7 268.2L632.2 272.4L633.6 269L635 271.7L636.5 269.4L638.1 271L639.3 269.1L640.9 271.9L642.2 268L643.4 271.8L644.8 268.2L646.3 272.2L647.6 269L648.8 272.5L650.3 268.3L651.5 271.8L653 268.6L654.2 271.8L655.8 269.2L657 271.5L658.5 268.1L659.7 271.3L661 269L662.3 271.3" stroke="#ff0080" stroke-width="0.7" fill="none" stroke-linejoin="round" opacity="1"/>
<path d="M662.3 271.3L664.4 285L666 271L667.9 285Q668.6 290 668.7 295L668.9 323Q669 328 674 328L680 328Q685 328 685 323L685 266.4Q685 261.4 687.5 261.4L687.5 261.4Q690 261.4 693 264.2L693 264.2Q696 267 697 269L698 271L699 267.8Q700 264.6 702.5 267.8L702.5 267.8Q705 271 705.3 276L706.3 295Q706.6 300 706.9 305L707.9 321Q708 322 708.8 321.4L710.2 320.6Q711 320 711 319L713 270L715.5 270.5Q718 271 718.7 276L719.9 285Q720.6 290 720.8 295L721.6 315L722.4 269.4L725.2 271.2Q728 273 728.3 278L728.9 290Q729.2 295 729.5 300L730.4 318L731.6 273L735 276L736 269.3" stroke="#ff0080" stroke-width="0.7" fill="none" stroke-linejoin="round" opacity="1"/>
<path d="M736 269.3L737.6 272.3L738.8 267.9L740 271.7L741.6 268.2L743.1 271.8L744.3 268.5L745.5 271.4L746.8 269.5L748.1 272.4L749.6 268.7L751 271.8L752.3 268.5L753.6 272.3L755.1 268.8L756.6 272.3L757.9 269.2L759.4 272.6L760.9 268.3L762.4 272.2L763.8 268.8" stroke="#ff0080" stroke-width="0.7" fill="none" stroke-linejoin="round" opacity="1"/>
<path d="M763.8 268.8L764.4 275Q764.8 280 764.8 285L765.2 323Q765.2 328 770.2 328L776.6 328Q781.6 328 781.6 323L781.6 267Q781.6 262 784.3 262L784.3 262Q787 262 790.1 265.9L790.9 267.1Q794 271 795.6 275.7L796.4 278.3Q798 283 798.3 288L799.6 311" stroke="#ff0080" stroke-width="0.7" fill="none" stroke-linejoin="round" opacity="1"/>
<path d="M81 400.6H800" stroke="#ffff00" stroke-width="1"/>
<path d="M81 473.6H800" stroke="#6464ff" stroke-width="1"/>
<g fill="#e8e8e8" font-family="Liberation Sans, sans-serif" font-size="6.4">
<text x="49.5" y="482.3">Čas, ms</text>
<text x="81" y="483.2">0.00</text>
<text x="133.1" y="483.2">9.14</text>
<text x="185.2" y="483.2">18.27</text>
<text x="237.2" y="483.2">27.35</text>
<text x="289.3" y="483.2">36.48</text>
<text x="341.4" y="483.2">45.33</text>
<text x="393.5" y="483.2">54.10</text>
<text x="445.6" y="483.2">63.01</text>
<text x="497.7" y="483.2">71.81</text>
<text x="549.7" y="483.2">80.98</text>
<text x="601.8" y="483.2">90.08</text>
<text x="653.9" y="483.2">99.21</text>
<text x="706" y="483.2">108.09</text>
<text x="758.1" y="483.2">117.03</text>
</g>
</svg>

<!-- scrollbar -->
<div class="a" style="left:44px;top:487.5px;width:954px;height:11px;background:linear-gradient(#dcdcdc 0,#f4f4f4 2px,#fcfcfc 5px,#f6f6f6 9px,#f0f0f0 11px)"></div>
<div class="btn" style="left:44.3px;top:487.3px;width:12.4px;height:12px;background:#efefef;border-color:#fff #a0a0a0 #a0a0a0 #fff"></div>
<div class="btn" style="left:56.7px;top:487.3px;width:12.4px;height:12px;background:#efefef;border-color:#fff #a0a0a0 #a0a0a0 #fff"></div>
<div class="btn" style="left:69.4px;top:488px;width:11.6px;height:9px;background:#f4f4f4;border-color:#b8b8b8"></div>
<div class="a" style="left:75px;top:488.5px;width:1px;height:8px;background:#b0b0b0"></div>
<div class="btn" style="left:972.3px;top:487.3px;width:12.6px;height:12px;background:#efefef;border-color:#fff #a0a0a0 #a0a0a0 #fff"></div>
<div class="btn" style="left:984.9px;top:487.3px;width:12.6px;height:12px;background:#efefef;border-color:#fff #a0a0a0 #a0a0a0 #fff"></div>
<svg class="a" style="left:44px;top:487px" width="956" height="13" viewBox="44 487 956 13"><g fill="#8a8a8a"><path d="M53 490.2v6l-4.4-3z"/><path d="M62.2 490.2v6l-4.2-3zM66.6 490.2v6l-4.2-3z"/></g><g fill="#111"><path d="M975 490.2v6l4.2-3zM979.3 490.2v6l4.2-3z"/><path d="M988.6 490.2v6l4.6-3z"/></g></svg>

<!-- toolbar -->

<div class="btn" style="left:44.600px;top:502.500px;width:23.300px;height:16.200px;background:#ebebeb;border-color:#f6f6f6"></div>
<div class="btn" style="left:69.800px;top:502.500px;width:23.300px;height:16.200px;background:#ebebeb;border-color:#f6f6f6"></div>
<div class="btn" style="left:94.900px;top:502.500px;width:23px;height:16.200px;background:#ebebeb;border-color:#f6f6f6"></div>
<div class="btn" style="left:123.900px;top:502.500px;width:23.100px;height:16.200px;background:#ebebeb;border-color:#f6f6f6"></div>
<div class="btn" style="left:148.800px;top:502.500px;width:23px;height:16.200px;background:#e6e6e6;border-color:#a8a8a8 #f8f8f8 #f8f8f8 #a8a8a8"></div>
<div class="btn" style="left:177.800px;top:503px;width:20.100px;height:13.800px;background:#f0f0f0;border-color:#6e6e6e #9a9a9a #9a9a9a #6e6e6e"></div>
<div class="a" style="left:190.500px;top:504px;width:6.400px;height:11.800px;background:#fbfbfb"></div>
<div class="btn" style="left:204.800px;top:502.500px;width:16.400px;height:16.200px;background:#ebebeb;border-color:#f6f6f6 #b0b0b0 #f6f6f6 #f6f6f6"></div>
<div class="btn" style="left:226px;top:502px;width:72.500px;height:16.600px;background:#f1f1f1;border-color:#dadada #fbfbfb #fbfbfb #dadada"></div>
<div class="t" id="tfield" style="left:236.200px;top:506.100px;font-size:8.750px;color:#1a1a1a;">0.00/124.17 s</div>
<div class="btn" style="left:891.900px;top:502.600px;width:15px;height:16.200px;background:#ebebeb;border-color:#f6f6f6"></div>
<div class="btn" style="left:907.400px;top:502px;width:19.800px;height:17px;background:#f2f2f2;border-color:#d6d6d6 #fbfbfb #fbfbfb #bdbdbd"></div>
<div class="btn" style="left:928.300px;top:502.600px;width:16.300px;height:16.200px;background:#ebebeb;border-color:#f6f6f6"></div>
<div class="btn" style="left:945.900px;top:502.600px;width:15.600px;height:16.200px;background:#ebebeb;border-color:#f6f6f6 #d0d0d0 #f6f6f6 #f6f6f6"></div>
<div class="btn" style="left:963.600px;top:502.600px;width:15.800px;height:16.200px;background:#ebebeb;border-color:#f6f6f6 #d0d0d0 #f6f6f6 #f6f6f6"></div>
<div class="btn" style="left:981px;top:502.600px;width:16.200px;height:16.200px;background:#ebebeb;border-color:#f6f6f6"></div>
<div class="t" id="zt" style="left:910px;top:505.900px;font-size:8.900px;font-family:'Liberation Serif',serif;color:#1c120a;">1:10</div>
<svg class="a" style="left:40px;top:500px" width="960" height="22" viewBox="40 500 960 22">
<circle cx="56.200" cy="510.600" r="6.500" fill="#4b4b4b"/><path d="M54 507.200v6.800l5.800-3.400z" fill="#fff"/>
<circle cx="81.400" cy="510.600" r="6.500" fill="#4b4b4b"/><rect x="78.800" y="508" width="5.200" height="5.200" fill="#fff"/>
<g stroke="#5a5a5a" fill="none"><circle cx="106.300" cy="510.800" r="3.400" stroke-width="1.500"/><g stroke-width="0.900"><path d="M106.300 504v3M102.200 506.200l1.800 2M110.400 506.200l-1.800 2M99.600 510.800h3.200M113 510.800h-3.200M101.800 515.800l2.200-2.400M110.800 515.800l-2.200-2.400M104.200 517.200l.8-2.600M108.400 517.200l-.8-2.600"/></g></g>
<circle cx="106.300" cy="510.800" r="1.900" fill="#dcdcdc"/>
<path d="M128.800 504.600h13.800v13.200h-13.800z" fill="#0f68ae"/><rect x="131.500" y="504.600" width="8.400" height="5" fill="#f4f4f4"/><rect x="132" y="513.200" width="6.200" height="4.600" fill="#4f9bd4"/><rect x="132.800" y="514" width="2" height="3.800" fill="#0f68ae"/>
<path d="M153.600 504.800h5.400l1.400 1.600h7v11.200h-13.800z" fill="#0f68ae"/><path d="M156.600 510.200h11.800l-2 7.400h-12.400z" fill="#ededed" stroke="#b8b8b8" stroke-width="0.400"/>
<path d="M180.500 510.200h8" stroke="#c4c4c4" stroke-width="0.600" stroke-dasharray="1.500 1"/><path d="M192 509.200h3.600l-1.800 2.200z" fill="#6a6a6a"/>
<g stroke="#555" stroke-width="0.800"><path d="M206.200 504.200l13.600 13.800M219.800 504.200l-13.600 13.800"/></g>
<g stroke="#b4b4b4" stroke-width="1.100" fill="none"><path d="M208.200 514.500v-6.500M213 508v-4M213 518v-4M217.800 514.500v-6.500"/></g>
<g fill="#b4b4b4"><path d="M206.800 509l1.400-2.200 1.400 2.200zM216.400 509l1.400-2.200 1.400 2.200z"/></g>
<!-- magnifiers -->
<g fill="none" stroke="#111"><circle cx="901.200" cy="507.700" r="2.700" stroke-width="0.900" stroke="#333"/><path d="M899.200 510L895 514.800" stroke-width="2.100" stroke-linecap="round"/><path d="M900.800 515.200h2" stroke-width="0.600" stroke="#444"/>
<circle cx="938" cy="507.700" r="2.700" stroke-width="0.900" stroke="#333"/><path d="M936 510L931.800 514.800" stroke-width="2.100" stroke-linecap="round"/><path d="M937.200 515.200h2.200M938.300 514.100v2.200" stroke-width="0.600" stroke="#444"/></g>
<rect x="949.400" y="505.500" width="3.400" height="10.400" fill="#cfcfcf"/><rect x="948" y="507.200" width="0.900" height="2.400" fill="#111"/><rect x="954" y="507.400" width="5.800" height="2.200" fill="#111"/>
<rect x="966" y="508" width="11" height="1.100" fill="#111"/><rect x="966" y="512" width="11" height="1.600" fill="#c4c4c4"/>
<rect x="984.200" y="506.200" width="9.800" height="9" rx="1.800" fill="#fff"/><rect x="983" y="505.100" width="9.800" height="9" rx="1.800" fill="#000"/>
</svg>


<!-- status bar -->
<div class="a" style="left:0;top:523.4px;width:1000px;height:1px;background:#dedede"></div>
<div class="a" style="left:0;top:524.4px;width:1000px;height:12.6px;background:#f1f1f1"></div><div class="a" style="left:0;top:535.4px;width:1000px;height:1.6px;background:#fafafa"></div>
<div class="a" style="left:101.4px;top:525px;width:1px;height:11px;background:#d2d2d2"></div>
<div class="a" style="left:102.4px;top:525px;width:1px;height:11px;background:#fcfcfc"></div>
<div class="a" style="left:966px;top:525px;width:1px;height:11px;background:#d2d2d2"></div>
<div class="t" id="st1" style="left:4.8px;top:525.5px;font-size:8.8px;letter-spacing:-0.36px;color:#0a0a3a;">Rozhraní:</div>
<div class="a" style="left:45.2px;top:526.1px;width:7px;height:6.6px;background:#9c1010"></div>
<div class="t" id="st2" style="left:56.2px;top:525.5px;font-size:8.8px;letter-spacing:-0.1px;color:#0a0a3a;">Vozidlo:</div>
<div class="a" style="left:91.6px;top:526.1px;width:7px;height:6.6px;background:#9c1010"></div>
<div class="t" id="st3" style="left:105.5px;top:525.5px;font-size:8.8px;letter-spacing:-0.15px;color:#0a0a3a;">Nepřipojeno</div>
<div class="a" style="left:969.2px;top:526.4px;width:6.6px;height:6.4px;background:#9a1212"></div>
<div class="t" id="st4" style="left:979px;top:526px;font-size:8.2px;color:#1a2050;"><span style="color:#a8a8b0">--.-</span>V</div>

<!-- taskbar -->
<div class="a" style="left:0;top:537px;width:1000px;height:26px;background:linear-gradient(90deg,#3c1d21 0,#3c1d21 40%,#2a1a1b 52%,#1d1b1a 62%,#1f1d1b 80%,#2a2520 90%,#2c2722 100%)"></div>
<div class="a" style="left:0;top:537px;width:31px;height:26px;background:#40382e"></div>
<div class="a" style="left:31px;top:537px;width:188.5px;height:26px;background:#f2f2f2"></div>

<div class="a" style="left:348.600px;top:537px;width:32.800px;height:26px;background:#644a4d"></div>
<div class="a" style="left:319px;top:560.700px;width:27px;height:2.300px;background:#76b4e6"></div>
<div class="a" style="left:348.600px;top:560.700px;width:32.800px;height:2.300px;background:#8cc4f0"></div>
<div class="a" style="left:384px;top:560.700px;width:27px;height:2.300px;background:#76b4e6"></div>
<div class="t" id="hled" style="left:57.200px;top:546.200px;font-size:10px;color:#404040;">Hledat</div>
<div class="t" id="tm1" style="left:934px;top:541.100px;font-size:7.700px;color:#fff;letter-spacing:-0.200px">19:40</div>
<div class="t" id="tm2" style="left:925px;top:552.700px;font-size:7.700px;color:#fff;letter-spacing:-0.200px">20.11.2024</div>
<svg class="a" style="left:0;top:537px" width="1000" height="26" viewBox="0 537 1000 26">
<g fill="#fff"><path d="M10 546.400l4.600-.7v4.400h-4.600zM15.300 545.600l6-.9v5.400h-6zM10 550.800h4.600v4.400l-4.600-.7zM15.300 550.800h6v5.400l-6-.9z"/></g>
<g fill="none" stroke="#3a3a3a" stroke-width="0.950"><circle cx="46.200" cy="548" r="3.300"/><path d="M43.800 550.500L39.600 554.900"/></g>
<g fill="#fff"><rect x="229" y="544.900" width="1.400" height="9.900"/><rect x="234.500" y="544.900" width="1.400" height="9.900"/><rect x="229" y="546.700" width="6.900" height="1.200"/><rect x="229" y="551.500" width="6.900" height="1.200" fill="#d8d0d0"/><rect x="238.300" y="544.900" width="0.900" height="9.900" fill="#e4dede"/><rect x="238" y="547.900" width="1.500" height="1.300"/></g>
<!-- folder -->
<path d="M260.200 543.700h6.400l.6 1.200h7.700v11h-14.700z" fill="#e8a800"/><path d="M260.200 545.500h14.700v10.500h-14.700z" fill="#fbd56a"/><path d="M262.900 550h9.300v6h-9.300z" fill="#2a9af0"/><path d="M265.300 552.400h4.500v3.600h-4.500z" fill="#fbd56a"/>
<!-- outlook -->
<rect x="296.800" y="543.400" width="10.200" height="12.400" rx="1" fill="#28a8ea"/><rect x="301.800" y="543.400" width="5.200" height="6" fill="#50d0f8" opacity="0.700"/><rect x="292.200" y="546" width="8.600" height="8.600" rx="0.800" fill="#0a5cbc"/>
<circle cx="296.500" cy="550.300" r="2.100" fill="none" stroke="#fff" stroke-width="1.100"/>
<!-- chrome -->
<g>
<circle cx="332.600" cy="549.600" r="7.600" fill="#de4a3c"/>
<path d="M332.600 549.600L326 545.800A7.600 7.600 0 0 0 332.600 557.200L336.400 550.600z" fill="#2aa04a"/>
<path d="M332.600 549.600h7.500A7.600 7.600 0 0 1 332.600 557.200L336.400 550.600z" fill="#f6c12c"/>
<path d="M332.600 546.100h6.700A7.600 7.600 0 0 1 340.200 549.600 7.600 7.600 0 0 1 332.600 557.200L335.700 551.400z" fill="#f6c12c"/>
<circle cx="332.600" cy="549.600" r="3.500" fill="#f4f4f4"/><circle cx="332.600" cy="549.600" r="2.700" fill="#3b82e8"/>
<circle cx="336.600" cy="553.800" r="3.700" fill="#7a3aa8"/><circle cx="336.600" cy="552.800" r="1.400" fill="#c89ae0"/>
</g>
<!-- forscan -->
<circle cx="364.600" cy="549.600" r="7.500" fill="#18589a"/><circle cx="364.600" cy="549.600" r="6.100" fill="none" stroke="#f2f6fa" stroke-width="0.900"/>
<path d="M360.400 551.400h8.400v-1.800l-1.200-.4-.8-1.600h-4.400l-.8 1.600-1.200.4z" fill="#fff"/><path d="M359.600 546.400h4v2h-4z" fill="#dfe9f4" opacity="0.800"/>
<!-- word -->
<rect x="393.200" y="543.600" width="10.800" height="12.200" rx="0.800" fill="#2b7cd3"/><rect x="393.200" y="549.600" width="10.800" height="6.200" fill="#185abd"/><rect x="393.200" y="543.600" width="10.800" height="3.100" fill="#41a5ee"/><rect x="388.600" y="546" width="8.400" height="8.400" rx="0.800" fill="#124a9e"/>
<text x="392.800" y="552.600" font-family="Liberation Sans, sans-serif" font-weight="bold" font-size="6" text-anchor="middle" fill="#fff">W</text>
<!-- tray -->
<g fill="none" stroke="#fff" stroke-width="0.900">
<path d="M862.200 552.200l4-3.800 4 3.800"/>
<path d="M895 553.400a7.600 7.600 0 0 1 7.400-7.400M897.400 553.400a5.200 5.200 0 0 1 5-5M899.800 553.400a2.800 2.800 0 0 1 2.600-2.600" stroke-width="0.800"/>
<path d="M908.600 548.400h1.800l2.600-2.400v8l-2.600-2.400h-1.800z" stroke-width="0.700"/><path d="M914.600 547.600q1.600 2.400 0 4.800M916.200 546.200q2.600 3.800 0 7.600" stroke-width="0.600" stroke="#cfcfcf"/>
<path d="M973.400 545h9.400v7.600h-3.600l-1.200 1.600-1.200-1.600h-3.400z" stroke-width="0.900"/>
</g>
<rect x="878.600" y="547.600" width="8.800" height="4.800" fill="#fff"/><rect x="877.400" y="548.800" width="1.200" height="2.400" fill="#fff"/><path d="M878.600 546.200h2.400v1.400h-2.400z" fill="#fff"/>
</svg>

</body></html>
